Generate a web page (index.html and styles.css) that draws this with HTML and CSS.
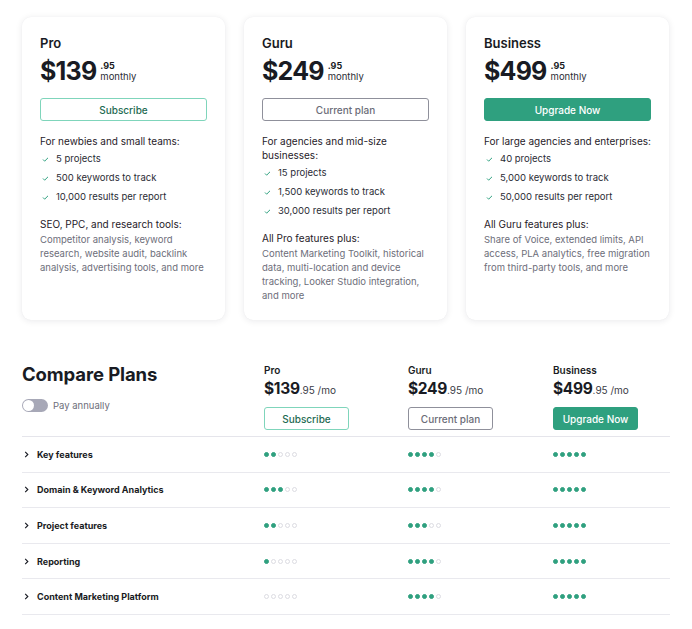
FILE: index.html
```html
<!DOCTYPE html>
<html>
<head>
<meta charset="utf-8">
<link rel="stylesheet" href="styles.css">
</head>
<body>
<div class="page">
  <div class="cards">
    <div class="card">
      <div class="plan">Pro</div>
      <div class="price"><span class="amount">$139</span><span class="meta"><span class="cents">.95</span><span class="per">monthly</span></span></div>
      <button class="btn btn-outline">Subscribe</button>
      <div class="lead">For newbies and small teams:</div>
      <ul class="checks">
        <li><svg viewBox="0 0 8 6" class="chk"><polyline points="1,3 3,5 7,1"/></svg>5 projects</li>
        <li><svg viewBox="0 0 8 6" class="chk"><polyline points="1,3 3,5 7,1"/></svg>500 keywords to track</li>
        <li><svg viewBox="0 0 8 6" class="chk"><polyline points="1,3 3,5 7,1"/></svg>10,000 results per report</li>
      </ul>
      <div class="sub">SEO, PPC, and research tools:</div>
      <div class="desc">Competitor analysis, keyword research, website audit, backlink analysis, advertising tools, and more</div>
    </div>
    <div class="card">
      <div class="plan">Guru</div>
      <div class="price"><span class="amount">$249</span><span class="meta"><span class="cents">.95</span><span class="per">monthly</span></span></div>
      <button class="btn btn-gray">Current plan</button>
      <div class="lead">For agencies and mid-size businesses:</div>
      <ul class="checks">
        <li><svg viewBox="0 0 8 6" class="chk"><polyline points="1,3 3,5 7,1"/></svg>15 projects</li>
        <li><svg viewBox="0 0 8 6" class="chk"><polyline points="1,3 3,5 7,1"/></svg>1,500 keywords to track</li>
        <li><svg viewBox="0 0 8 6" class="chk"><polyline points="1,3 3,5 7,1"/></svg>30,000 results per report</li>
      </ul>
      <div class="sub">All Pro features plus:</div>
      <div class="desc">Content Marketing Toolkit, historical data, multi-location and device tracking, Looker Studio integration, and more</div>
    </div>
    <div class="card">
      <div class="plan">Business</div>
      <div class="price"><span class="amount">$499</span><span class="meta"><span class="cents">.95</span><span class="per">monthly</span></span></div>
      <button class="btn btn-green">Upgrade Now</button>
      <div class="lead">For large agencies and enterprises:</div>
      <ul class="checks">
        <li><svg viewBox="0 0 8 6" class="chk"><polyline points="1,3 3,5 7,1"/></svg>40 projects</li>
        <li><svg viewBox="0 0 8 6" class="chk"><polyline points="1,3 3,5 7,1"/></svg>5,000 keywords to track</li>
        <li><svg viewBox="0 0 8 6" class="chk"><polyline points="1,3 3,5 7,1"/></svg>50,000 results per report</li>
      </ul>
      <div class="sub">All Guru features plus:</div>
      <div class="desc">Share of Voice, extended limits, API access, PLA analytics, free migration from third-party tools, and more</div>
    </div>
  </div>

  <div class="compare">
    <div class="chead">
      <div class="ctitle">
        <h2>Compare Plans</h2>
        <div class="toggle"><span class="track"><span class="knob"></span></span><span class="tlabel">Pay annually</span></div>
      </div>
      <div class="col">
        <div class="cname">Pro</div>
        <div class="cprice"><b>$139</b>.95 /mo</div>
        <button class="btn sm btn-outline">Subscribe</button>
      </div>
      <div class="col">
        <div class="cname">Guru</div>
        <div class="cprice"><b>$249</b>.95 /mo</div>
        <button class="btn sm btn-gray">Current plan</button>
      </div>
      <div class="col">
        <div class="cname">Business</div>
        <div class="cprice"><b>$499</b>.95 /mo</div>
        <button class="btn sm btn-green">Upgrade Now</button>
      </div>
    </div>

    <div class="row">
      <div class="rlabel"><svg class="chev" viewBox="0 0 5 8"><polyline points="1,1 4,4 1,7"/></svg>Key features</div>
      <div class="dots"><i class="on"></i><i class="on"></i><i></i><i></i><i></i></div>
      <div class="dots"><i class="on"></i><i class="on"></i><i class="on"></i><i class="on"></i><i></i></div>
      <div class="dots"><i class="on"></i><i class="on"></i><i class="on"></i><i class="on"></i><i class="on"></i></div>
    </div>
    <div class="row">
      <div class="rlabel"><svg class="chev" viewBox="0 0 5 8"><polyline points="1,1 4,4 1,7"/></svg>Domain &amp; Keyword Analytics</div>
      <div class="dots"><i class="on"></i><i class="on"></i><i class="on"></i><i></i><i></i></div>
      <div class="dots"><i class="on"></i><i class="on"></i><i class="on"></i><i class="on"></i><i></i></div>
      <div class="dots"><i class="on"></i><i class="on"></i><i class="on"></i><i class="on"></i><i class="on"></i></div>
    </div>
    <div class="row">
      <div class="rlabel"><svg class="chev" viewBox="0 0 5 8"><polyline points="1,1 4,4 1,7"/></svg>Project features</div>
      <div class="dots"><i class="on"></i><i class="on"></i><i></i><i></i><i></i></div>
      <div class="dots"><i class="on"></i><i class="on"></i><i class="on"></i><i></i><i></i></div>
      <div class="dots"><i class="on"></i><i class="on"></i><i class="on"></i><i class="on"></i><i class="on"></i></div>
    </div>
    <div class="row">
      <div class="rlabel"><svg class="chev" viewBox="0 0 5 8"><polyline points="1,1 4,4 1,7"/></svg>Reporting</div>
      <div class="dots"><i class="on"></i><i></i><i></i><i></i><i></i></div>
      <div class="dots"><i class="on"></i><i class="on"></i><i class="on"></i><i class="on"></i><i></i></div>
      <div class="dots"><i class="on"></i><i class="on"></i><i class="on"></i><i class="on"></i><i class="on"></i></div>
    </div>
    <div class="row last">
      <div class="rlabel"><svg class="chev" viewBox="0 0 5 8"><polyline points="1,1 4,4 1,7"/></svg>Content Marketing Platform</div>
      <div class="dots"><i></i><i></i><i></i><i></i><i></i></div>
      <div class="dots"><i class="on"></i><i class="on"></i><i class="on"></i><i class="on"></i><i></i></div>
      <div class="dots"><i class="on"></i><i class="on"></i><i class="on"></i><i class="on"></i><i class="on"></i></div>
    </div>
  </div>
</div>
</body>
</html>
```

FILE: styles.css
```css
* { box-sizing: border-box; }
html, body { margin: 0; padding: 0; background: #fff; }
body {
  font-family: Inter, "Noto Sans", "Liberation Sans", sans-serif;
  color: #191b23;
}
.page { padding: 17px 22px 0 22px; width: 692px; }

.cards {
  display: grid;
  grid-template-columns: 203px 203px 203px;
  gap: 19px;
}
.card {
  background: #fff;
  border-radius: 9px;
  box-shadow: 0 1px 7px rgba(20, 20, 40, 0.09), 0 0 1px rgba(20,20,40,0.06);
  padding: 18px 18px 17px 18px;
}
.plan { font-size: 13px; font-weight: 600; line-height: 16px; }
.price { display: flex; align-items: center; margin-top: 5px; height: 30px; }
.amount { font-size: 25px; font-weight: 700; letter-spacing: -0.8px; line-height: 30px; }
.meta { display: flex; flex-direction: column; margin-left: 4px; margin-top: 1px; }
.cents { font-size: 9px; font-weight: 700; line-height: 10px; }
.per { font-size: 9.5px; line-height: 11px; color: #2a2c35; }

.btn {
  display: block;
  width: 167px;
  height: 23px;
  margin-top: 12px;
  border-radius: 3px;
  font-family: inherit;
  font-size: 10px;
  font-weight: 500;
  background: #fff;
  padding: 0;
  cursor: pointer;
}
.btn-outline { border: 1px solid #7fd5bb; color: #1e6a52; }
.btn-gray { border: 1px solid #8f909b; color: #6b6c78; }
.btn-green { border: 1px solid #2fa07f; background: #2fa07f; color: #fff; }
.btn.sm { width: 85px; margin-top: 7px; }

.lead { font-size: 10px; line-height: 14px; margin-top: 13px; color: #1f2129; }
.checks { list-style: none; margin: 4px 0 0; padding: 0; }
.checks li { font-size: 9.5px; line-height: 14px; margin-bottom: 5px; display: flex; align-items: center; color: #2a2c35; }
.chk { width: 7px; height: 5px; margin: 0 7px 0 2px; fill: none; stroke: #2fa07f; stroke-width: 1.2; }
.sub { font-size: 10px; line-height: 14px; margin-top: 13px; color: #1f2129; }
.desc { font-size: 9.5px; line-height: 14px; margin-top: 2px; color: #6d6e7a; }

.compare { margin-top: 40px; width: 648px; }
.chead {
  display: grid;
  grid-template-columns: 242px 144px 145px 117px;
  padding-bottom: 6px;
  border-bottom: 1px solid #e5e5eb;
}
.ctitle h2 { margin: 2px 0 0; font-size: 18.5px; font-weight: 700; line-height: 24px; letter-spacing: -0.1px; }
.toggle { display: flex; align-items: center; margin-top: 13px; }
.track { width: 26px; height: 13px; border-radius: 7px; background: #a7a8b7; position: relative; display: inline-block; }
.knob { position: absolute; left: 1px; top: 1px; width: 11px; height: 11px; border-radius: 50%; background: #fff; }
.tlabel { font-size: 9.5px; color: #6d6e7a; margin-left: 5px; }
.cname { font-size: 10px; font-weight: 600; line-height: 14px; margin-top: 3px; }
.cprice { font-size: 10px; line-height: 20px; color: #3a3c46; margin-top: 2px; }
.cprice b { font-size: 15.5px; font-weight: 700; color: #191b23; letter-spacing: -0.3px; }

.row {
  display: grid;
  grid-template-columns: 242px 144px 145px 117px;
  align-items: center;
  height: 35.6px;
  border-bottom: 1px solid #e9e9ee;
}
.rlabel { font-size: 9px; font-weight: 700; display: flex; align-items: center; padding-left: 2px; }
.chev { width: 5px; height: 7px; fill: none; stroke: #191b23; stroke-width: 1.3; margin-right: 8px; }
.dots { display: flex; gap: 2px; }
.dots i { display: block; width: 5px; height: 5px; border-radius: 50%; border: 1px solid #dcdce2; }
.dots i.on { background: #2fa07f; border-color: #2fa07f; }
```
